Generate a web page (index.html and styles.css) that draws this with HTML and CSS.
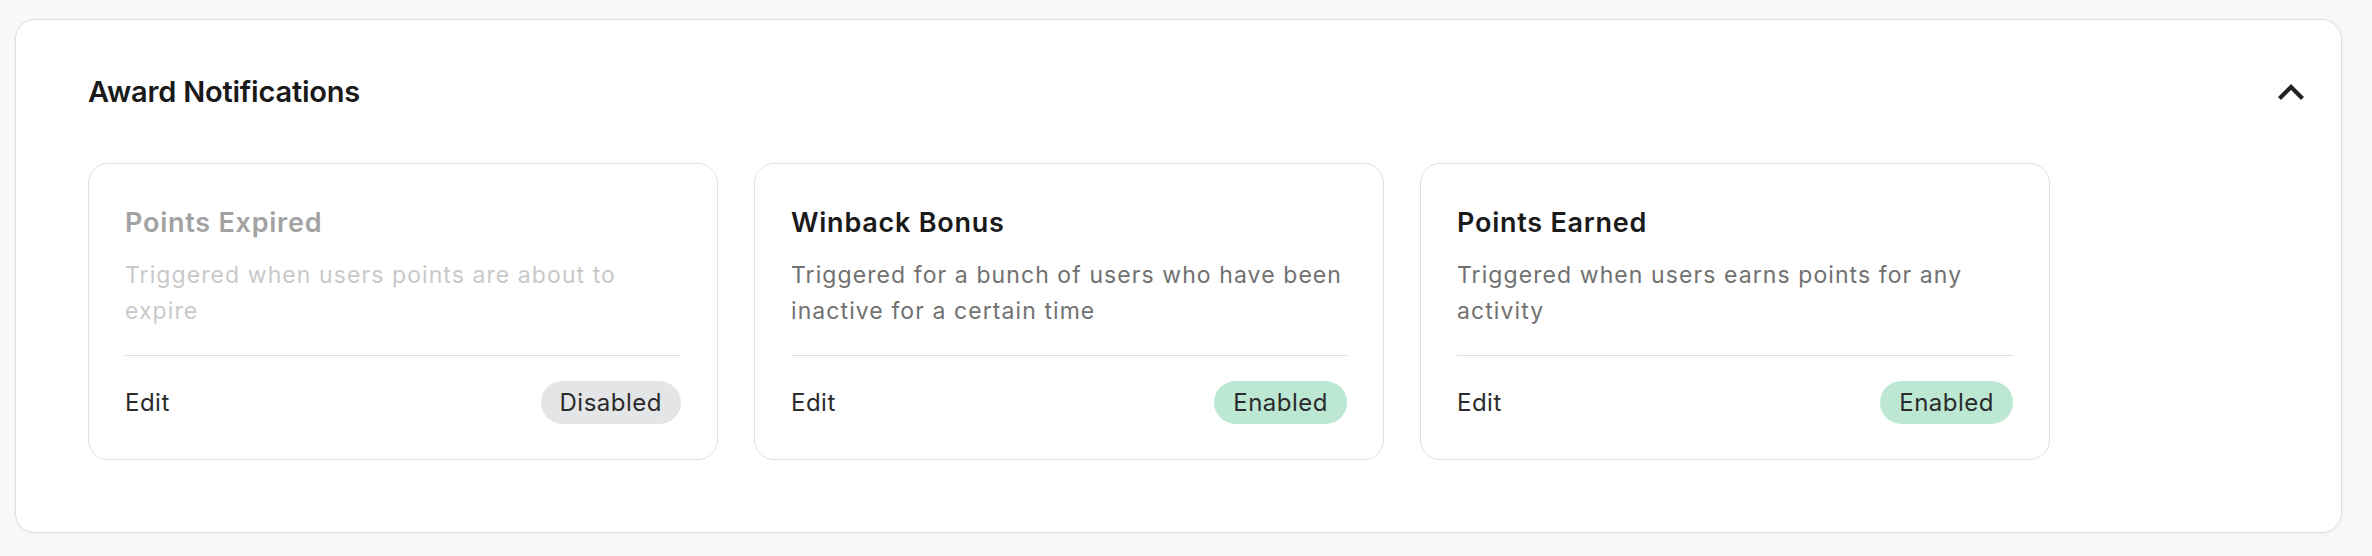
FILE: index.html
```html
<!DOCTYPE html>
<html lang="en">
<head>
<meta charset="utf-8">
<title>Award Notifications</title>
<link rel="stylesheet" href="styles.css">
</head>
<body>
  <section class="panel">
    <header class="panel-header">
      <h2 class="panel-title">Award Notifications</h2>
      <button class="collapse-btn" aria-label="Collapse">
        <svg width="28" height="18" viewBox="0 0 28 18" fill="none">
          <polyline points="2.5,15.5 14,4 25.5,15.5" stroke="#222" stroke-width="4.2" stroke-linecap="butt" stroke-linejoin="miter"/>
        </svg>
      </button>
    </header>
    <div class="panel-body">
      <article class="notif-card is-disabled">
        <h3 class="notif-title">Points Expired</h3>
        <p class="notif-desc">Triggered when users points are about to expire</p>
        <div class="notif-footer">
          <span class="notif-edit">Edit</span>
          <span class="badge badge-off">Disabled</span>
        </div>
      </article>
      <article class="notif-card">
        <h3 class="notif-title">Winback Bonus</h3>
        <p class="notif-desc">Triggered for a bunch of users who have been inactive for a certain time</p>
        <div class="notif-footer">
          <span class="notif-edit">Edit</span>
          <span class="badge badge-on">Enabled</span>
        </div>
      </article>
      <article class="notif-card">
        <h3 class="notif-title">Points Earned</h3>
        <p class="notif-desc">Triggered when users earns points for any activity</p>
        <div class="notif-footer">
          <span class="notif-edit">Edit</span>
          <span class="badge badge-on">Enabled</span>
        </div>
      </article>
    </div>
  </section>
</body>
</html>
```
FILE: styles.css
```css
* { box-sizing: border-box; }

html, body {
  margin: 0;
  padding: 0;
}

body {
  background: #f9f9f9;
  font-family: Inter, "Noto Sans", "Liberation Sans", sans-serif;
  color: #1a1a1a;
  padding: 19px 30px 22px 15px;
}

.panel {
  background: #ffffff;
  border: 1px solid #dedee2;
  border-radius: 20px;
  box-shadow: 0 1px 4px rgba(0, 0, 0, 0.05);
}

.panel-header {
  display: flex;
  align-items: center;
  justify-content: space-between;
  padding: 49px 36px 49px 72px;
}

.panel-title {
  margin: 0;
  font-size: 29px;
  line-height: 45px;
  font-weight: 600;
  color: #1a1a1a;
  letter-spacing: -0.2px;
}

.collapse-btn {
  border: 0;
  background: none;
  padding: 0;
  width: 28px;
  height: 18px;
  display: flex;
  align-items: center;
  justify-content: center;
}

.panel-body {
  display: grid;
  grid-template-columns: repeat(3, 630px);
  gap: 36px;
  padding: 0 72px 72px;
}

.notif-card {
  border: 1px solid #e1e1e4;
  border-radius: 20px;
  padding: 41px 36px 35px;
  display: flex;
  flex-direction: column;
}

.notif-title {
  margin: 0;
  font-size: 27px;
  line-height: 36px;
  font-weight: 600;
  letter-spacing: 0.75px;
  color: #1a1a1a;
}

.notif-desc {
  margin: 16px 0 0;
  font-size: 23px;
  line-height: 36px;
  font-weight: 400;
  letter-spacing: 1.08px;
  color: #717171;
  min-height: 72px;
}

.notif-footer {
  margin-top: 26px;
  border-top: 1px solid #dedee2;
  padding-top: 25px;
  display: flex;
  align-items: center;
  justify-content: space-between;
}

.notif-edit {
  font-size: 24px;
  line-height: 36px;
  letter-spacing: 0.5px;
  color: #2b2b2b;
}

.badge {
  font-size: 24px;
  line-height: 36px;
  letter-spacing: 0.5px;
  padding: 3.5px 19px;
  border-radius: 999px;
  color: #2b2b2b;
}

.badge-off { background: #e4e5e7; }
.badge-on { background: #bce8d3; }

.is-disabled .notif-title { color: #a2a2a2; }
.is-disabled .notif-desc { color: #c9c9c9; }
```
